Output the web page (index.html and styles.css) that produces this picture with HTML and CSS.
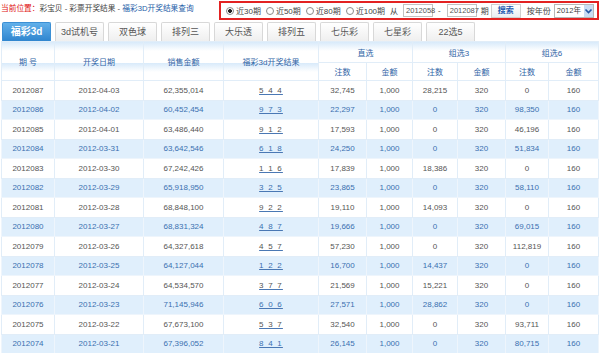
FILE: index.html
```html
<!DOCTYPE html>
<html lang="zh-CN">
<head>
<meta charset="utf-8">
<title>福彩3D开奖结果查询</title>
<link rel="stylesheet" href="styles.css">
</head>
<body>
<div class="topbar">
  <div class="crumb"><span class="here">当前位置：</span>彩宝贝 - 彩票开奖结果 - <a class="cur">福彩3D开奖结果查询</a></div>
  <div class="filter">
    <label class="opt"><span class="radio on"></span>近30期</label>
    <label class="opt"><span class="radio"></span>近50期</label>
    <label class="opt"><span class="radio"></span>近80期</label>
    <label class="opt"><span class="radio"></span>近100期</label>
    <span class="word from">从</span>
    <span class="inp">2012058</span>
    <span class="word dash">-</span>
    <span class="inp">2012087</span>
    <span class="word qi">期</span>
    <span class="btn">搜索</span>
    <span class="word year">按年份</span>
    <span class="sel"><span class="selv">2012年</span><span class="arrow"><svg width="9" height="12" viewBox="0 0 9 12"><path d="M1.5 4.5 L4.5 7.5 L7.5 4.5" fill="none" stroke="#2456a4" stroke-width="1.6"/></svg></span></span>
  </div>
</div>
<div class="tabs">
  <span class="tab active">福彩3d</span>
  <span class="tab">3d试机号</span>
  <span class="tab">双色球</span>
  <span class="tab">排列三</span>
  <span class="tab">大乐透</span>
  <span class="tab">排列五</span>
  <span class="tab">七乐彩</span>
  <span class="tab">七星彩</span>
  <span class="tab">22选5</span>
</div>
<table class="grid">
  <colgroup>
    <col class="c1"><col class="c2"><col class="c3"><col class="c4">
    <col class="c5"><col class="c6"><col class="c7"><col class="c8"><col class="c9"><col class="c10">
  </colgroup>
  <thead>
    <tr class="h1">
      <th rowspan="2">期 号</th>
      <th rowspan="2">开奖日期</th>
      <th rowspan="2">销售金额</th>
      <th rowspan="2">福彩3d开奖结果</th>
      <th colspan="2">直选</th>
      <th colspan="2">组选3</th>
      <th colspan="2">组选6</th>
    </tr>
    <tr class="h2">
      <th>注数</th><th>金额</th><th>注数</th><th>金额</th><th>注数</th><th>金额</th>
    </tr>
  </thead>
  <tbody>
    <tr><td>2012087</td><td>2012-04-03</td><td>62,355,014</td><td><a>5 4 4</a></td><td>32,745</td><td>1,000</td><td>28,215</td><td>320</td><td>0</td><td>160</td></tr>
    <tr class="alt"><td>2012086</td><td>2012-04-02</td><td>60,452,454</td><td><a>9 7 3</a></td><td>22,297</td><td>1,000</td><td>0</td><td>320</td><td>98,350</td><td>160</td></tr>
    <tr><td>2012085</td><td>2012-04-01</td><td>63,486,440</td><td><a>9 1 2</a></td><td>17,593</td><td>1,000</td><td>0</td><td>320</td><td>46,196</td><td>160</td></tr>
    <tr class="alt"><td>2012084</td><td>2012-03-31</td><td>63,642,546</td><td><a>6 1 8</a></td><td>24,250</td><td>1,000</td><td>0</td><td>320</td><td>51,834</td><td>160</td></tr>
    <tr><td>2012083</td><td>2012-03-30</td><td>67,242,426</td><td><a>1 1 6</a></td><td>17,839</td><td>1,000</td><td>18,386</td><td>320</td><td>0</td><td>160</td></tr>
    <tr class="alt"><td>2012082</td><td>2012-03-29</td><td>65,918,950</td><td><a>3 2 5</a></td><td>23,865</td><td>1,000</td><td>0</td><td>320</td><td>58,110</td><td>160</td></tr>
    <tr><td>2012081</td><td>2012-03-28</td><td>68,848,100</td><td><a>9 2 2</a></td><td>19,110</td><td>1,000</td><td>14,093</td><td>320</td><td>0</td><td>160</td></tr>
    <tr class="alt"><td>2012080</td><td>2012-03-27</td><td>68,831,324</td><td><a>4 8 7</a></td><td>19,666</td><td>1,000</td><td>0</td><td>320</td><td>69,015</td><td>160</td></tr>
    <tr><td>2012079</td><td>2012-03-26</td><td>64,327,618</td><td><a>4 5 7</a></td><td>57,230</td><td>1,000</td><td>0</td><td>320</td><td>112,819</td><td>160</td></tr>
    <tr class="alt"><td>2012078</td><td>2012-03-25</td><td>64,127,044</td><td><a>1 2 2</a></td><td>16,700</td><td>1,000</td><td>14,437</td><td>320</td><td>0</td><td>160</td></tr>
    <tr><td>2012077</td><td>2012-03-24</td><td>64,534,570</td><td><a>3 7 7</a></td><td>21,569</td><td>1,000</td><td>15,221</td><td>320</td><td>0</td><td>160</td></tr>
    <tr class="alt"><td>2012076</td><td>2012-03-23</td><td>71,145,946</td><td><a>6 0 6</a></td><td>27,571</td><td>1,000</td><td>28,862</td><td>320</td><td>0</td><td>160</td></tr>
    <tr><td>2012075</td><td>2012-03-22</td><td>67,673,100</td><td><a>5 3 7</a></td><td>32,540</td><td>1,000</td><td>0</td><td>320</td><td>93,711</td><td>160</td></tr>
    <tr class="alt"><td>2012074</td><td>2012-03-21</td><td>67,396,052</td><td><a>8 4 1</a></td><td>26,145</td><td>1,000</td><td>0</td><td>320</td><td>80,715</td><td>160</td></tr>
  </tbody>
</table>
</body>
</html>
```
FILE: styles.css
```css
html, body {
  margin: 0;
  padding: 0;
  background: #fff;
}
body {
  width: 600px;
  height: 353px;
  overflow: hidden;
  font-family: "Liberation Sans", "Noto Sans CJK SC", sans-serif;
  color: #555;
}

/* top bar */
.topbar {
  display: flex;
  align-items: flex-start;
  height: 22px;
}
.crumb {
  width: 218px;
  flex-shrink: 0;
  padding-left: 1px;
  padding-top: 4px;
  font-size: 7.7px;
  line-height: 10px;
  color: #444;
  white-space: nowrap;
}
.crumb .here { color: #e01010; }
.crumb .cur { color: #1e5ea8; }

.filter {
  flex-shrink: 0;
  margin-top: 1px;
  box-sizing: border-box;
  width: 380px;
  height: 19px;
  border: 2px solid #e32222;
  display: flex;
  align-items: center;
  padding-left: 5px;
  font-size: 8px;
  color: #444;
  white-space: nowrap;
}
.filter > * { flex-shrink: 0; }
.opt {
  display: flex;
  align-items: center;
  margin-right: 5px;
}
.radio {
  box-sizing: border-box;
  width: 8px;
  height: 8px;
  border-radius: 50%;
  border: 1px solid #8a8a8a;
  background: #fff;
  margin-right: 2px;
}
.radio.on {
  background: radial-gradient(circle, #222 0 1.6px, #fff 2.2px);
}
.word { display: inline-block; }
.from { margin-right: 5px; }
.dash { margin: 0 6px 0 5px; }
.qi { margin: 0 2px 0 4px; }
.year { margin: 0 3px 0 6px; }
.inp {
  box-sizing: border-box;
  width: 30px;
  height: 13px;
  border: 1px solid #c2c2c2;
  font-size: 7.5px;
  line-height: 11px;
  padding-left: 2px;
  color: #555;
  background: #fff;
}
.btn {
  box-sizing: border-box;
  width: 30px;
  height: 14px;
  border: 1px solid #d0d0d0;
  background: linear-gradient(#ffffff, #e9eef3);
  color: #1e5ab0;
  font-weight: bold;
  font-size: 8px;
  line-height: 12px;
  text-align: center;
}
.sel {
  box-sizing: border-box;
  width: 40px;
  height: 14px;
  border: 1px solid #b8b8b8;
  display: flex;
  background: #fff;
}
.selv {
  flex: 1;
  font-size: 7.5px;
  line-height: 12px;
  padding-left: 2px;
  color: #444;
}
.arrow {
  width: 9px;
  height: 12px;
  background: #c9dcf2;
  display: flex;
}

/* tabs */
.tabs {
  display: flex;
  gap: 4px;
  height: 19px;
  padding-left: 2px;
}
.tab {
  box-sizing: border-box;
  width: 49px;
  height: 19px;
  border: 1px solid #d8d8d8;
  border-bottom: none;
  border-radius: 2px 2px 0 0;
  background: linear-gradient(#ffffff, #efefef);
  color: #555;
  font-size: 9px;
  line-height: 18px;
  text-align: center;
}
.tab.active {
  border-color: #3b8fd4;
  background: linear-gradient(#62b0ea, #2f85cf);
  color: #fff;
  font-size: 10px;
  font-weight: bold;
}

/* table */
.grid {
  margin-left: 1px;
  width: 597px;
  border-collapse: collapse;
  table-layout: fixed;
  font-size: 8px;
}
.c1 { width: 53px; }
.c2 { width: 89px; }
.c3 { width: 80px; }
.c4 { width: 95px; }
.c5 { width: 48px; }
.c6 { width: 46px; }
.c7 { width: 45px; }
.c8 { width: 48px; }
.c9 { width: 43px; }
.c10 { width: 50px; }

.grid th, .grid td {
  padding: 0;
  text-align: center;
  border: 1px solid #e1edf8;
  overflow: hidden;
  white-space: nowrap;
}
.grid th {
  font-weight: normal;
  color: #2f64a6;
}
.grid thead tr.h1 {
  height: 21px;
  background: linear-gradient(#d8eafa 0, #ffffff 9px);
}
.grid thead tr.h2 {
  height: 18px;
  background: #fff;
}
.grid tbody tr {
  height: 19.5px;
}
.grid tbody td {
  color: #555;
}
.grid tbody tr.alt {
  background: #e0effc;
}
.grid tbody tr.alt td {
  color: #3b6fb0;
  border-color: #eef5fc;
}
.grid td a {
  color: inherit;
  text-decoration: underline;
  text-decoration-color: #4a78b4;
  letter-spacing: 1.2px;
}
```
